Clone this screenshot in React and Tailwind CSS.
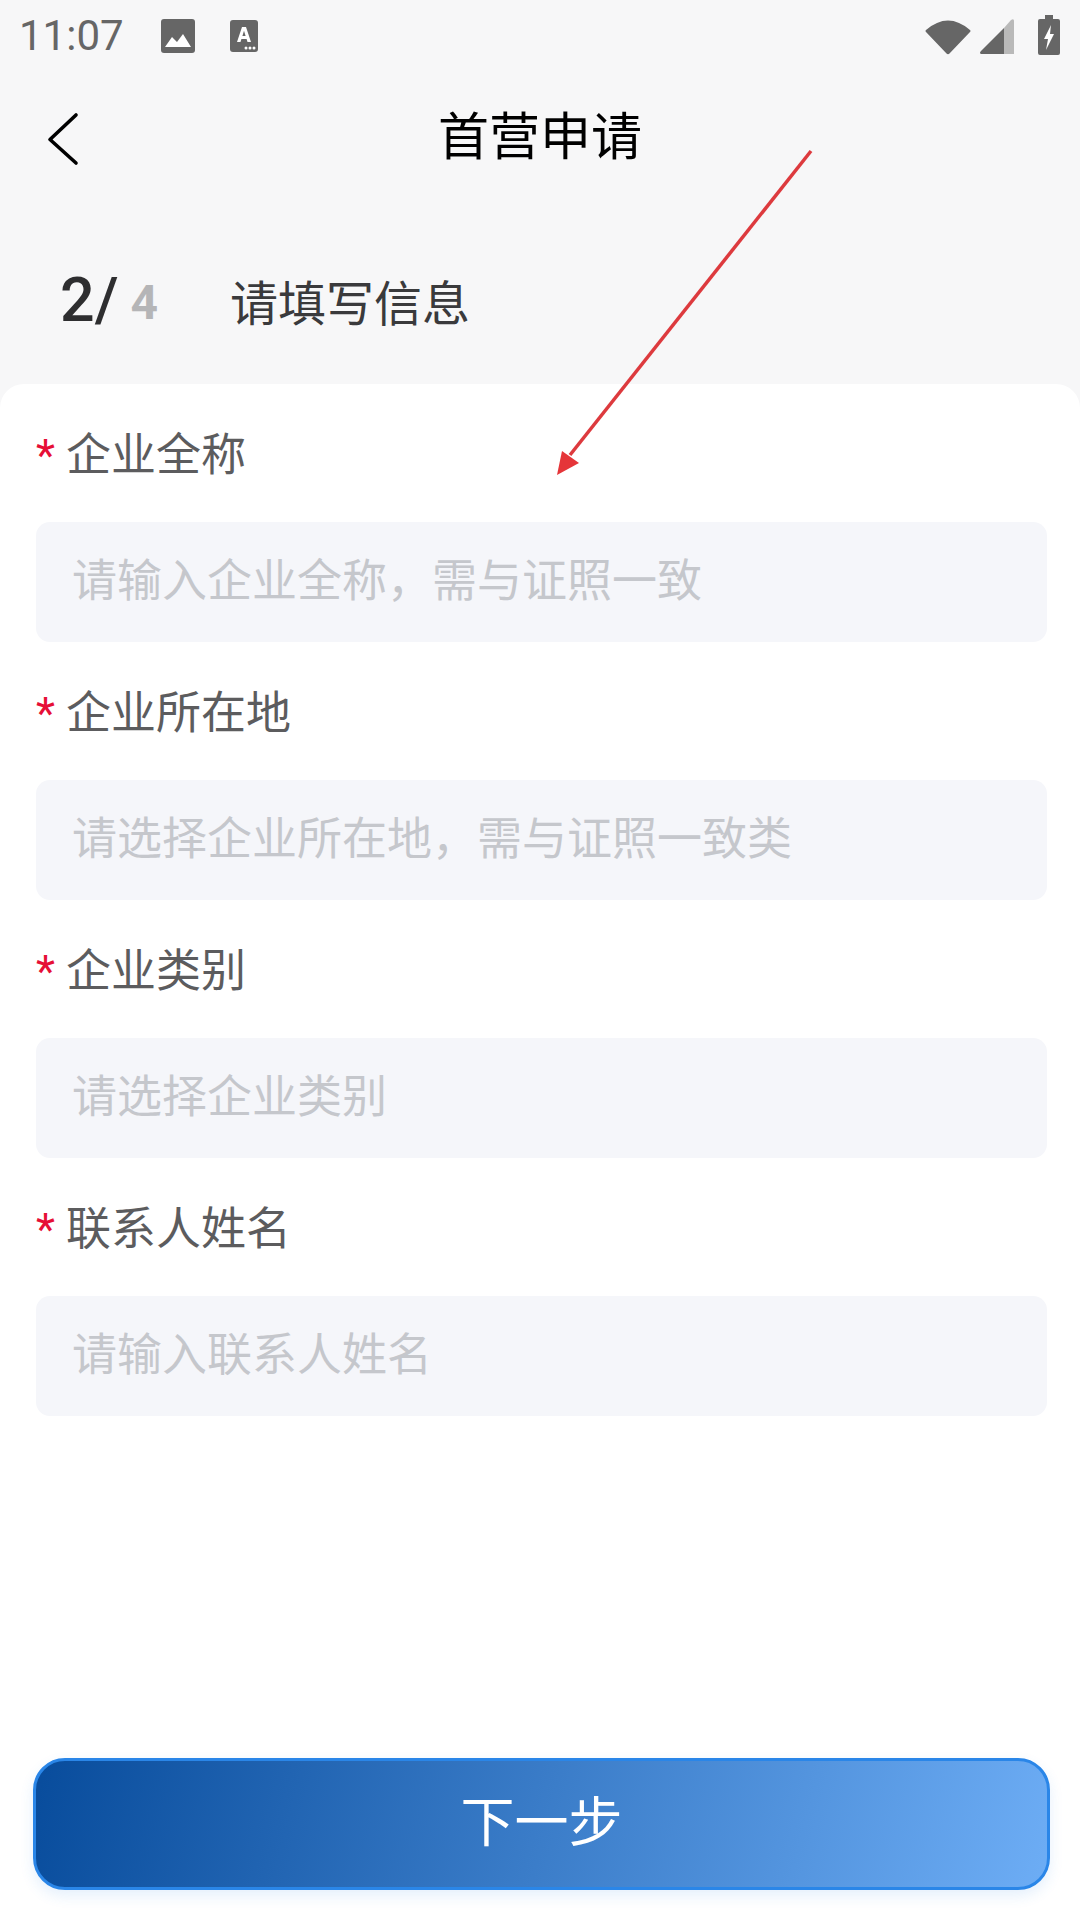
const CJK = "font-['Noto_Sans_CJK_SC','Noto_Sans',sans-serif]";

function Field({ label, placeholder }) {
  return (
    <div className="flex flex-col">
      <div className="flex h-[78px] items-center pb-[3px] pl-[36px]">
        <span className="w-[30px] pt-[9px] font-['Roboto',sans-serif] text-[44px] leading-none text-[#e60f36]">*</span>
        <span className="text-[45px] leading-none text-[#5c5c5e]">{label}</span>
      </div>
      <div className="ml-[36px] mr-[33px] mt-[30px] flex h-[120px] items-center rounded-[14px] bg-[#f5f6fa] pb-[9px] pl-[36px] text-[45px] leading-none text-[#c5c7cc]">
        {placeholder}
      </div>
    </div>
  );
}

export default function App() {
  return (
    <div className={`relative flex h-[1920px] w-[1080px] flex-col overflow-hidden bg-[#f7f7f8] ${CJK}`}>
      <div className="flex h-[72px] shrink-0 items-center justify-between pl-[19px] pr-[20px]">
        <div className="flex items-center">
          <span className="font-['Roboto',sans-serif] text-[42px] leading-none text-[#666666]">11:07</span>
          <svg className="ml-[36px]" width="36" height="36" viewBox="0 0 36 36">
            <rect x="1" y="1" width="34" height="34" rx="3" fill="#666666" />
            <path d="M5 29 L12 19 L17 24 L23 16 L31 29 Z" fill="#ffffff" />
          </svg>
          <svg className="ml-[34px]" width="28" height="32" viewBox="0 0 28 32">
            <rect width="28" height="32" rx="3" fill="#666666" />
            <path d="M7 22 L12 7 H16 L21 22 H17.5 L16.6 19 H11.4 L10.5 22 Z M12.4 16 H15.6 L14 10.8 Z" fill="#ffffff" fillRule="evenodd" />
            <circle cx="16" cy="28" r="1.5" fill="#ffffff" />
            <circle cx="20" cy="28" r="1.5" fill="#ffffff" />
            <circle cx="24" cy="28" r="1.5" fill="#ffffff" />
          </svg>
        </div>
        <div className="flex items-center">
          <svg width="46" height="38" viewBox="0 0 46 38">
            <path d="M1 13 Q23 -6 45 13 Q46 14 45 15 L24.5 36.5 Q23 38 21.5 36.5 L1 15 Q0 14 1 13 Z" fill="#666666" />
          </svg>
          <svg className="ml-[9px]" width="34" height="36" viewBox="0 0 34 36">
            <path d="M1 36 Q-1 35 1 33 L24 10 V36 Z" fill="#666666" />
            <path d="M24 10 L31 2 Q34 0 34 3 V36 H24 Z" fill="#b9b9b9" />
          </svg>
          <svg className="mb-[2px] ml-[24px]" width="22" height="40" viewBox="0 0 22 40">
            <path d="M7 0 H15 V4 H20 Q22 4 22 6 V38 Q22 40 20 40 H2 Q0 40 0 38 V6 Q0 4 2 4 H7 Z" fill="#666666" />
            <path d="M13 10 L6 24 H10 L8 35 L16 19 H12 Z" fill="#ffffff" />
          </svg>
        </div>
      </div>

      <div className="relative flex h-[122px] shrink-0 items-center justify-center">
        <svg className="absolute left-[46px] top-[39px]" width="34" height="56" viewBox="0 0 34 56">
          <path d="M30 4 L4 28.5 L30 52" fill="none" stroke="#000000" strokeWidth="3.6" strokeLinecap="round" strokeLinejoin="round" />
        </svg>
        <span className="text-[51px] leading-none text-black">首营申请</span>
      </div>

      <div className="flex h-[190px] shrink-0 items-center pl-[60px] pt-[22px]">
        <span className="font-['Roboto',sans-serif] text-[61px] font-medium leading-none text-[#2e2e30]">2/</span>
        <span className="ml-[12px] mt-[6px] font-['Roboto',sans-serif] text-[48px] font-bold leading-none text-[#b5b5b7]">4</span>
        <span className="ml-[72px] text-[48px] leading-none text-[#3a3a3c]">请填写信息</span>
      </div>

      <div className="flex flex-1 flex-col justify-between rounded-t-[24px] bg-white pb-[30px]">
        <div className="flex flex-col gap-[30px] pt-[30px]">
          <Field label="企业全称" placeholder="请输入企业全称，需与证照一致" />
          <Field label="企业所在地" placeholder="请选择企业所在地，需与证照一致类" />
          <Field label="企业类别" placeholder="请选择企业类别" />
          <Field label="联系人姓名" placeholder="请输入联系人姓名" />
        </div>
        <button className="ml-[33px] mr-[30px] flex h-[132px] items-center justify-center rounded-[32px] border-[3px] border-[#2a86e8] bg-[linear-gradient(105deg,#084c9c,#6dadf5)] pb-[10px] text-[54px] leading-none text-white shadow-[0_6px_14px_rgba(42,134,232,0.12)]">
          下一步
        </button>
      </div>

      <svg className="absolute left-[550px] top-[145px]" width="270" height="340" viewBox="0 0 270 340">
        <path d="M261 6 L20 310" stroke="#dd3a3e" strokeWidth="3.5" fill="none" />
        <path d="M7 330 L12 306 L29 318 Z" fill="#e53539" />
      </svg>
    </div>
  );
}
